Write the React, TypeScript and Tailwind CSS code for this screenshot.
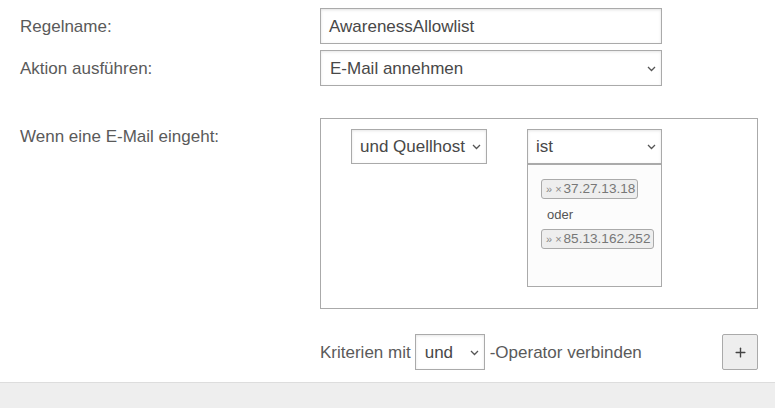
import { Plus } from 'lucide-react';

const Chevron = () => (
  <svg width="9" height="6" viewBox="0 0 9 6" className="shrink-0">
    <polyline points="1,1 4.5,4.5 8,1" fill="none" stroke="#555" strokeWidth="1.3" />
  </svg>
);

const Tag = ({ ip }: { ip: string }) => (
  <span className="inline-flex items-center h-[20px] pl-[4px] pr-[2px] border border-[#aaa] rounded-[3px] bg-[#eee] text-[13.6px] text-[#888] leading-none">
    <span className="text-[11px] mr-[3px]">»</span>
    <span className="text-[11px] mr-[2px]">×</span>
    <span className="text-[#777]">{ip}</span>
  </span>
);

export default function App() {
  return (
    <div className="w-[775px] h-[408px] bg-white overflow-hidden flex flex-col text-[17px] text-[#5a5a5a] font-['Liberation_Sans',Arial,sans-serif]">
      <div className="flex-1 flex flex-col pt-[8px]">
        {/* Regelname */}
        <div className="flex items-center h-[36px]">
          <div className="w-[320px] pl-[20px] pt-[1px]">Regelname:</div>
          <div className="w-[342px] h-[36px] border border-[#aaa] shadow-[inset_0_1px_3px_rgba(0,0,0,0.12)] flex items-center pl-[8px] pt-[1px] text-[#484848]">
            AwarenessAllowlist
          </div>
        </div>

        {/* Aktion */}
        <div className="flex items-center h-[36px] mt-[6px]">
          <div className="w-[320px] pl-[20px] pt-[1px]">Aktion ausführen:</div>
          <div className="w-[342px] h-[36px] border border-[#aaa] shadow-[inset_0_1px_3px_rgba(0,0,0,0.1)] flex items-center justify-between pl-[9px] pr-[5px] pt-[1px] text-[#484848]">
            <span>E-Mail annehmen</span>
            <Chevron />
          </div>
        </div>

        {/* Bedingungen */}
        <div className="flex mt-[32px]">
          <div className="w-[320px] pl-[20px] pt-[6px]">Wenn eine E-Mail eingeht:</div>
          <div className="w-[438px] h-[191px] border border-[#aaa] flex items-start pl-[30px] pt-[10px] gap-[40px]">
            <div className="w-[136px] h-[35px] border border-[#aaa] shadow-[inset_0_1px_3px_rgba(0,0,0,0.1)] flex items-center justify-between pl-[8px] pr-[5px] pt-[1px] text-[#484848]">
              <span>und Quellhost</span>
              <Chevron />
            </div>
            <div className="w-[135px] flex flex-col">
              <div className="h-[36px] border border-[#aaa] border-b-2 shadow-[inset_0_1px_3px_rgba(0,0,0,0.1)] flex items-center justify-between pl-[8px] pr-[5px] pt-[1px] text-[#484848]">
                <span>ist</span>
                <Chevron />
              </div>
              <div className="h-[122px] border border-t-0 border-[#aaa] bg-[#fcfcfc] flex flex-col items-start pl-[13px] pt-[14px]">
                <Tag ip="37.27.13.18" />
                <span className="text-[13px] text-[#555] ml-[6px] mt-[9px] mb-[8px] leading-none">oder</span>
                <Tag ip="85.13.162.252" />
              </div>
            </div>
          </div>
        </div>

        {/* Operator */}
        <div className="flex items-center h-[36px] mt-[25px] pl-[320px] pr-[17px]">
          <span className="pt-[1px]">Kriterien mit</span>
          <div className="w-[70px] h-[36px] ml-[4px] border border-[#aaa] shadow-[inset_0_1px_3px_rgba(0,0,0,0.1)] flex items-center justify-between pl-[9px] pr-[5px] pt-[1px] text-[#484848]">
            <span>und</span>
            <Chevron />
          </div>
          <span className="ml-[5px] pt-[1px]">-Operator verbinden</span>
          <button className="ml-auto w-[36px] h-[36px] border border-[#aaa] rounded-[2px] bg-[#eee] flex items-center justify-center">
            <Plus size={15} strokeWidth={2.2} color="#444" />
          </button>
        </div>
      </div>

      <div className="h-[26px] bg-[#eee] border-t border-[#ddd]" />
    </div>
  );
}
